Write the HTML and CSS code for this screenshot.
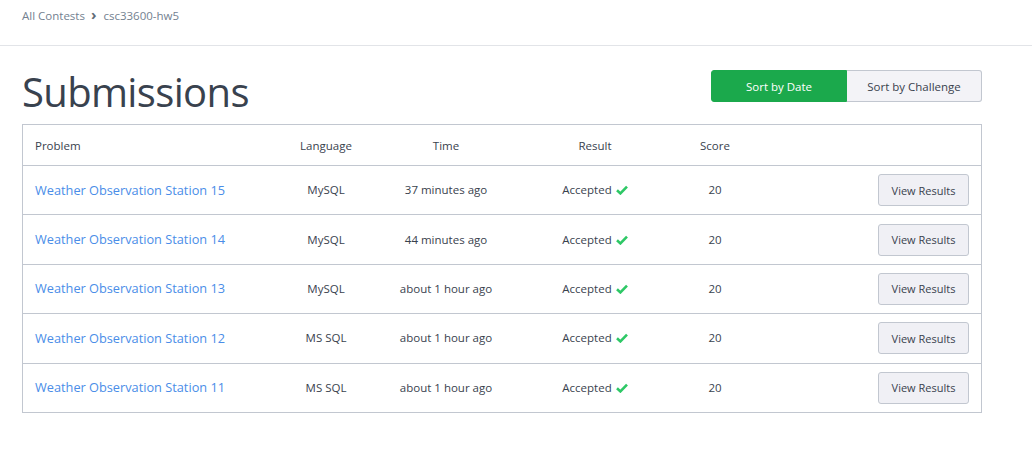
FILE: index.html
```html
<!DOCTYPE html>
<html>
<head>
<meta charset="utf-8">
<link rel="stylesheet" href="styles.css">
</head>
<body>
<div class="topbar">
  <nav class="crumbs"><a href="#">All Contests</a><span class="sep">›</span><a href="#">csc33600-hw5</a></nav>
</div>
<main class="page">
  <div class="head">
    <h1>Submissions</h1>
    <div class="toggle">
      <button class="tbtn active">Sort by Date</button>
      <button class="tbtn">Sort by Challenge</button>
    </div>
  </div>
  <div class="table">
    <div class="row hrow">
      <div class="c1">Problem</div><div class="c">Language</div><div class="c">Time</div><div class="c">Result</div><div class="c">Score</div><div class="c6"></div>
    </div>
    <div class="row">
      <div class="c1"><a href="#">Weather Observation Station 15</a></div><div class="c">MySQL</div><div class="c">37 minutes ago</div><div class="c">Accepted <svg class="chk" viewBox="0 0 12 10"><path d="M1 5.2 L4.4 8.4 L11 1.6" fill="none" stroke="#2ec866" stroke-width="2.6"/></svg></div><div class="c">20</div><div class="c6"><button class="vbtn">View Results</button></div>
    </div>
    <div class="row">
      <div class="c1"><a href="#">Weather Observation Station 14</a></div><div class="c">MySQL</div><div class="c">44 minutes ago</div><div class="c">Accepted <svg class="chk" viewBox="0 0 12 10"><path d="M1 5.2 L4.4 8.4 L11 1.6" fill="none" stroke="#2ec866" stroke-width="2.6"/></svg></div><div class="c">20</div><div class="c6"><button class="vbtn">View Results</button></div>
    </div>
    <div class="row">
      <div class="c1"><a href="#">Weather Observation Station 13</a></div><div class="c">MySQL</div><div class="c">about 1 hour ago</div><div class="c">Accepted <svg class="chk" viewBox="0 0 12 10"><path d="M1 5.2 L4.4 8.4 L11 1.6" fill="none" stroke="#2ec866" stroke-width="2.6"/></svg></div><div class="c">20</div><div class="c6"><button class="vbtn">View Results</button></div>
    </div>
    <div class="row">
      <div class="c1"><a href="#">Weather Observation Station 12</a></div><div class="c">MS SQL</div><div class="c">about 1 hour ago</div><div class="c">Accepted <svg class="chk" viewBox="0 0 12 10"><path d="M1 5.2 L4.4 8.4 L11 1.6" fill="none" stroke="#2ec866" stroke-width="2.6"/></svg></div><div class="c">20</div><div class="c6"><button class="vbtn">View Results</button></div>
    </div>
    <div class="row">
      <div class="c1"><a href="#">Weather Observation Station 11</a></div><div class="c">MS SQL</div><div class="c">about 1 hour ago</div><div class="c">Accepted <svg class="chk" viewBox="0 0 12 10"><path d="M1 5.2 L4.4 8.4 L11 1.6" fill="none" stroke="#2ec866" stroke-width="2.6"/></svg></div><div class="c">20</div><div class="c6"><button class="vbtn">View Results</button></div>
    </div>
  </div>
</main>
</body>
</html>
```
FILE: styles.css
```css
* { box-sizing: border-box; }
html, body { margin: 0; padding: 0; background: #fff; }
body { font-family: "Open Sans", "Liberation Sans", sans-serif; color: #39424e; }

.topbar {
  height: 46px;
  border-bottom: 1px solid #e2e4e8;
  padding: 4px 22px 0;
}
.crumbs { font-size: 11.5px; line-height: 20px; color: #738190; font-weight: 500; }
.crumbs a { color: #738190; text-decoration: none; }
.crumbs .sep { margin: 0 7px 0 6px; color: #5f6b78; font-size: 15px; font-weight: 700; }

.page { padding: 0 50px 0 22px; }
.head {
  display: flex;
  justify-content: space-between;
  align-items: flex-start;
  height: 78px;
}
h1 {
  margin: 18px 0 0;
  font-size: 40px;
  font-weight: 500;
  letter-spacing: -0.65px;
  line-height: 56px;
  color: #39424e;
}
.toggle { display: flex; margin-top: 24px; }
.tbtn {
  font-family: inherit;
  font-size: 11.5px;
  height: 32px;
  width: 136px;
  border: 1px solid #c2c7d0;
  background: #f3f3f7;
  color: #39424e;
  padding: 0;
}
.tbtn:first-child { border-radius: 3px 0 0 3px; }
.tbtn:last-child { border-radius: 0 3px 3px 0; border-left: none; width: 135px; }
.tbtn.active { background: #1ba94c; border-color: #1ba94c; color: #fff; }

.table { width: 960px; border: 1px solid #c2c7d0; }
.row {
  display: grid;
  grid-template-columns: 243px 120px 120px 178px 62px 1fr;
  align-items: center;
  height: 49.4px;
  border-top: 1px solid #c2c7d0;
  font-size: 11.5px;
  color: #39424e;
  padding-bottom: 1px;
}
.row.hrow { border-top: none; height: 40px; padding-bottom: 0; }
.c1 { padding-left: 12px; }
.c1 a { color: #4a8de8; text-decoration: none; font-size: 12.75px; }
.c { text-align: center; white-space: nowrap; }
.c6 { display: flex; justify-content: flex-end; padding-right: 12px; padding-top: 1px; }
.chk { width: 12px; height: 10px; vertical-align: -1px; margin-left: 1px; }
.vbtn {
  font-family: inherit;
  font-size: 11px;
  color: #39424e;
  width: 91px;
  height: 32px;
  background: #f0f0f5;
  border: 1px solid #c2c7d0;
  border-radius: 3px;
  padding: 0;
}
```
